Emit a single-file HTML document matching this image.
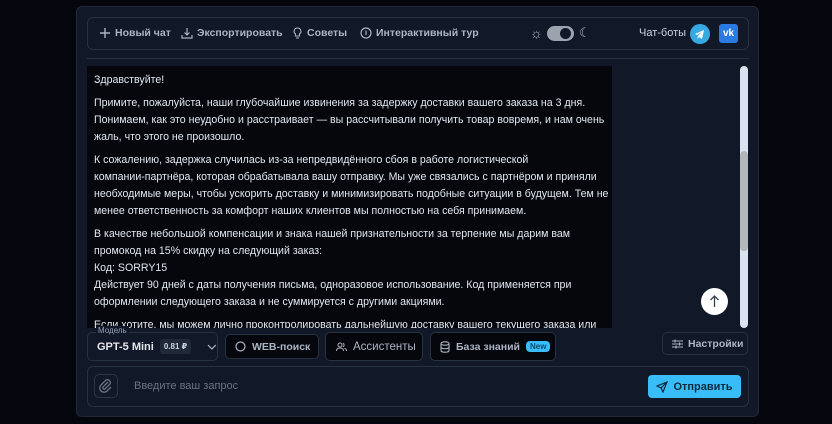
<!DOCTYPE html><html><head><meta charset="utf-8"><style>
*{box-sizing:border-box;margin:0;padding:0}
body{width:832px;height:424px;background:#05060d;font-family:"Liberation Sans","DejaVu Sans",sans-serif;color:#cbd5e1;position:relative;overflow:hidden}
.a{position:absolute;white-space:nowrap}
.panel{left:76px;top:6px;width:683px;height:411px;background:#111827;border:1px solid #1f2937;border-radius:6px}
.hdr{left:87px;top:17px;width:662px;height:33px;border:1px solid #263142;border-radius:6px}
.hi{top:27px;font-size:10.5px;font-weight:bold;color:#aab4c3;display:flex;align-items:center;gap:4px}
.msg{left:87px;top:66px;width:525px;height:262px;background:#05070d;overflow:hidden;padding:6px 6px 6px 7px;font-size:10.6px;line-height:17px;color:#e2e8f0;white-space:nowrap}
.msg p{margin-bottom:6px}
.btn{border:1px solid #263142;border-radius:5px;display:flex;align-items:center;font-size:10.5px;font-weight:bold;color:#aab4c3}
</style></head><body>
<div class="a panel"></div>
<div class="a hdr"></div>
<div class="a hi" style="left:99px"><svg width="12" height="12" viewBox="0 0 12 12"><path d="M6 1v10M1 6h10" stroke="#aab4c3" stroke-width="1.4"/></svg>Новый чат</div>
<div class="a hi" style="left:181px"><svg width="12" height="12" viewBox="0 0 12 12" fill="none" stroke="#aab4c3" stroke-width="1.2"><path d="M6 1v7M3.5 5.5L6 8l2.5-2.5M1 8v3h10V8"/></svg>Экспортировать</div>
<div class="a hi" style="left:292px"><svg width="11" height="12" viewBox="0 0 11 12" fill="none" stroke="#aab4c3" stroke-width="1.1"><path d="M5.5 1a3.3 3.3 0 0 0-2 6v2h4V7a3.3 3.3 0 0 0-2-6zM4 11h3"/></svg> Советы</div>
<div class="a hi" style="left:360px"><svg width="12" height="12" viewBox="0 0 12 12" fill="none" stroke="#aab4c3" stroke-width="1.2"><circle cx="6" cy="6" r="5"/><path d="M6 3.5v4.5"/></svg> Интерактивный тур</div>
<div class="a" style="left:530px;top:26px;color:#aab4c3;font-size:14px;line-height:14px">☼</div>
<div class="a" style="left:547px;top:26px;width:27px;height:15px;border-radius:8px;background:#9ca3af"><div class="a" style="left:13px;top:2px;width:11px;height:11px;border-radius:50%;background:#111827"></div></div>
<div class="a" style="left:579px;top:26px;color:#aab4c3;font-size:13px;line-height:13px">☾</div>
<div class="a" style="left:639px;top:27px;font-size:11px;color:#cbd5e1">Чат-боты</div>
<div class="a" style="left:690px;top:24px;width:20px;height:20px;border-radius:50%;background:#38a9e0"><svg width="20" height="20" viewBox="0 0 20 20"><path d="M5 10l9-4-2 9-3-2-1.5 2 .3-3L12 8 7 11z" fill="#fff"/></svg></div>
<div class="a" style="left:719px;top:24px;width:19px;height:19px;border-radius:3px;background:#2a7ae2;color:#fff;font-size:10px;font-weight:bold;text-align:center;line-height:19px">vk</div>
<div class="a" style="left:87px;top:58px;width:662px;height:1px;background:#263142"></div>
<div class="a msg">
<p>Здравствуйте!</p>
<p>Примите, пожалуйста, наши глубочайшие извинения за задержку доставки вашего заказа на 3 дня.<br>Понимаем, как это неудобно и расстраивает — вы рассчитывали получить товар вовремя, и нам очень<br>жаль, что этого не произошло.</p>
<p>К сожалению, задержка случилась из-за непредвидённого сбоя в работе логистической<br>компании-партнёра, которая обрабатывала вашу отправку. Мы уже связались с партнёром и приняли<br>необходимые меры, чтобы ускорить доставку и минимизировать подобные ситуации в будущем. Тем не<br>менее ответственность за комфорт наших клиентов мы полностью на себя принимаем.</p>
<p>В качестве небольшой компенсации и знака нашей признательности за терпение мы дарим вам<br>промокод на 15% скидку на следующий заказ:<br>Код: SORRY15<br>Действует 90 дней с даты получения письма, одноразовое использование. Код применяется при<br>оформлении следующего заказа и не суммируется с другими акциями.</p>
<p>Если хотите, мы можем лично проконтролировать дальнейшую доставку вашего текущего заказа или</p>
</div>
<div class="a" style="left:740px;top:66px;width:8px;height:262px;border-radius:4px;background:#dbe3ee"><div class="a" style="left:0;top:85px;width:8px;height:100px;border-radius:4px;background:#b3b6ba"></div></div>
<div class="a" style="left:701px;top:288px;width:27px;height:27px;border-radius:50%;background:#fff"><svg width="27" height="27" viewBox="0 0 27 27" fill="none" stroke="#374151" stroke-width="1.3"><path d="M13.5 19V8M9.5 12l4-4 4 4"/></svg></div>
<div class="a btn" style="left:87px;top:332px;width:131px;height:29px;padding-left:9px;color:#e5e7eb;font-size:11px">GPT-5 Mini<span style="margin-left:6px;background:#1f2937;border-radius:3px;font-size:8px;padding:3px 4px;color:#cbd5e1">0.81 ₽</span><svg style="margin-left:16px" width="10" height="6" viewBox="0 0 10 6" fill="none" stroke="#aab4c3" stroke-width="1.2"><path d="M1 1l4 4 4-4"/></svg></div>
<div class="a" style="left:96px;top:326px;font-size:8px;color:#94a3b8;background:#111827;padding:0 2px">Модель</div>
<div class="a btn" style="left:225px;top:334px;width:94px;height:25px;background:#05070d;padding-left:9px;gap:6px"><svg width="11" height="11"><circle cx="5.5" cy="5.5" r="4.5" fill="none" stroke="#aab4c3" stroke-width="1.2"/></svg>WEB-поиск</div>
<div class="a btn" style="left:325px;top:332px;width:98px;height:29px;background:#05070d;padding-left:10px;gap:6px;font-weight:normal;font-size:11.5px"><svg width="11" height="10" viewBox="0 0 11 10" fill="none" stroke="#aab4c3" stroke-width="1"><circle cx="4" cy="3" r="2"/><path d="M0.5 9c0-2 1.5-3 3.5-3s3.5 1 3.5 3M7 1.2a2 2 0 0 1 0 3.6M8.5 6.3c1.3.4 2 1.3 2 2.7"/></svg>Ассистенты</div>
<div class="a btn" style="left:430px;top:332px;width:126px;height:29px;background:#05070d;padding-left:9px;gap:6px"><svg width="10" height="12" viewBox="0 0 10 12" fill="none" stroke="#aab4c3" stroke-width="1.1"><ellipse cx="5" cy="2.5" rx="4" ry="1.7"/><path d="M1 2.5v7c0 1 1.8 1.7 4 1.7s4-.7 4-1.7v-7M1 6c0 1 1.8 1.7 4 1.7S9 7 9 6"/></svg>База знаний<span style="background:#38bdf8;color:#0c4a6e;border-radius:4px;font-size:8px;padding:1px 4px">New</span></div>
<div class="a btn" style="left:662px;top:332px;width:86px;height:23px;padding-left:9px;gap:5px;font-size:10.5px"><svg width="11" height="10" viewBox="0 0 11 10" stroke="#aab4c3" stroke-width="1.1"><path d="M0 2h11M0 5h11M0 8h11M3 0.5v3M7.5 3.5v3M4 6.5v3"/></svg>Настройки</div>
<div class="a" style="left:87px;top:366px;width:662px;height:41px;border:1px solid #263142;border-radius:6px"></div>
<div class="a" style="left:94px;top:374px;width:24px;height:24px;border:1px solid #2a3547;border-radius:5px"><svg width="22" height="22" viewBox="0 0 22 22" fill="none" stroke="#6b7280" stroke-width="1.3"><path d="M13 7l-5 5a1.5 1.5 0 0 0 2 2l5-5a3 3 0 0 0-4-4l-5 5a4.2 4.2 0 0 0 6 6l4-4"/></svg></div>
<div class="a" style="left:134px;top:380px;font-size:11px;color:#6b7280">Введите ваш запрос</div>
<div class="a" style="left:648px;top:375px;width:93px;height:23px;border-radius:4px;background:#38bdf8;color:#0f2a3d;font-size:11px;font-weight:bold;display:flex;align-items:center;justify-content:center;gap:5px"><svg width="12" height="12" viewBox="0 0 12 12" fill="none" stroke="#0f2a3d" stroke-width="1.2"><path d="M11 1L1 5l4 2 2 4zM5 7l6-6"/></svg>Отправить</div>
</body></html>
